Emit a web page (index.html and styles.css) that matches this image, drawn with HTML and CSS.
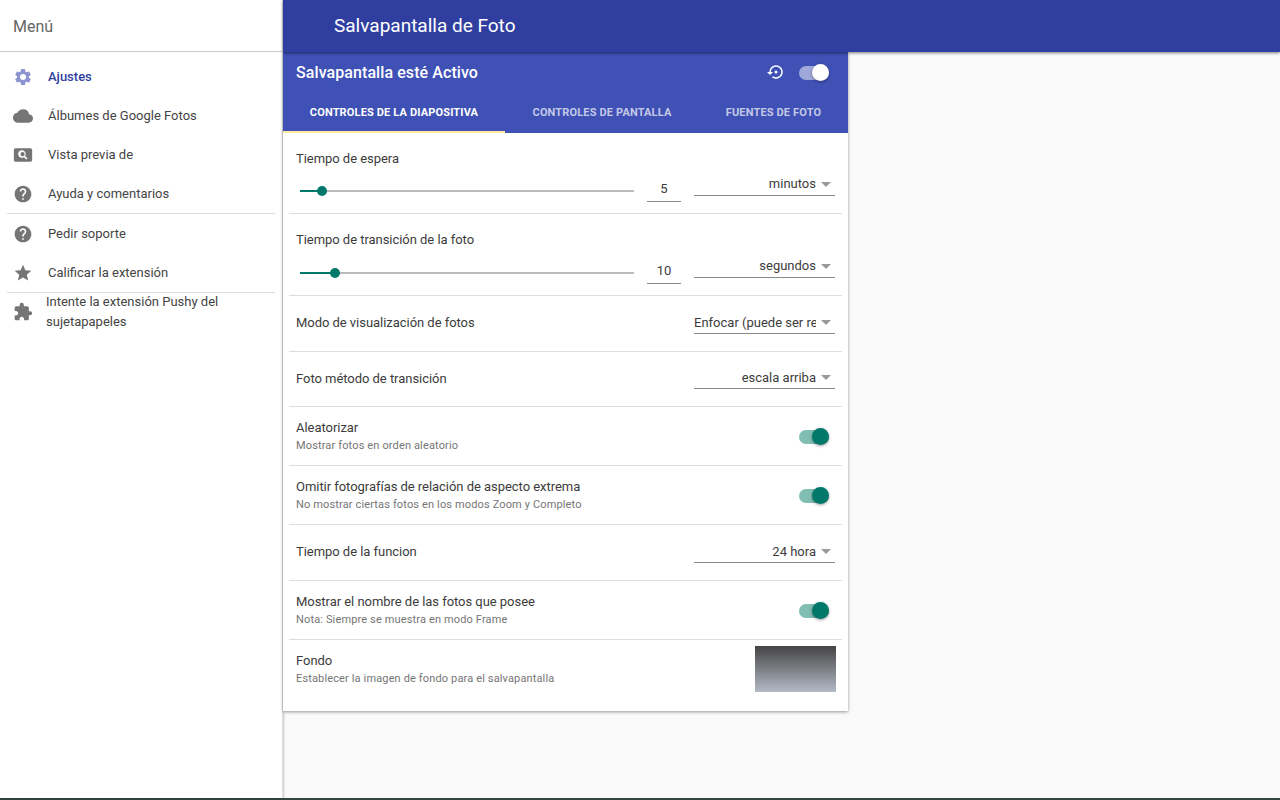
FILE: index.html
```html
<!DOCTYPE html>
<html lang="es">
<head>
  <meta charset="UTF-8" />
  <title>Salvapantalla de Foto</title>
  <link rel="stylesheet" href="styles.css">
</head>
<body>
  <div class="page">

    <!-- Menu lateral -->
    <aside class="drawer">
      <div class="drawer-title">Menú</div>
      <nav class="menu">
        <a class="menu-item selected">
          <svg class="icon" viewBox="0 0 24 24"><path d="M19.14 12.94c.04-.3.06-.61.06-.94s-.02-.64-.07-.94l2.03-1.58a.49.49 0 0 0 .12-.61l-1.92-3.32a.49.49 0 0 0-.59-.22l-2.39.96a7.03 7.03 0 0 0-1.62-.94l-.36-2.54a.48.48 0 0 0-.48-.41h-3.84a.47.47 0 0 0-.47.41l-.36 2.54c-.59.24-1.13.57-1.62.94l-2.39-.96a.48.48 0 0 0-.59.22L2.74 8.87a.47.47 0 0 0 .12.61l2.03 1.58c-.05.3-.09.63-.09.94s.02.64.07.94l-2.03 1.58a.49.49 0 0 0-.12.61l1.92 3.32c.12.22.37.29.59.22l2.39-.96c.5.38 1.03.7 1.62.94l.36 2.54c.05.24.24.41.48.41h3.84c.24 0 .44-.17.47-.41l.36-2.54c.59-.24 1.13-.56 1.62-.94l2.39.96c.22.08.47 0 .59-.22l1.92-3.32a.47.47 0 0 0-.12-.61l-2.01-1.58zM12 15.6A3.6 3.6 0 1 1 12 8.4a3.6 3.6 0 0 1 0 7.2z"/></svg>
          <span>Ajustes</span>
        </a>
        <a class="menu-item">
          <svg class="icon" viewBox="0 0 24 24"><path d="M19.35 10.04A7.49 7.49 0 0 0 12 4C9.11 4 6.6 5.64 5.35 8.04A5.994 5.994 0 0 0 0 14c0 3.31 2.69 6 6 6h13c2.76 0 5-2.24 5-5 0-2.64-2.05-4.78-4.65-4.96z"/></svg>
          <span>Álbumes de Google Fotos</span>
        </a>
        <a class="menu-item">
          <svg class="icon" viewBox="0 0 24 24"><path d="M21 4H3a2 2 0 0 0-2 2v12a2 2 0 0 0 2 2h18a2 2 0 0 0 2-2V6a2 2 0 0 0-2-2zm-5 13.5-2.9-2.9a4.5 4.5 0 1 1 1.4-1.4l2.9 2.9-1.4 1.4zM11.5 8.5a2.5 2.5 0 1 0 0 5 2.5 2.5 0 0 0 0-5z" fill-rule="evenodd"/></svg>
          <span>Vista previa de</span>
        </a>
        <a class="menu-item">
          <svg class="icon" viewBox="0 0 24 24"><path d="M12 2C6.48 2 2 6.48 2 12s4.48 10 10 10 10-4.48 10-10S17.52 2 12 2zm1 17h-2v-2h2v2zm2.07-7.75-.9.92C13.45 12.9 13 13.5 13 15h-2v-.5c0-1.1.45-2.1 1.17-2.83l1.24-1.26c.37-.36.59-.86.59-1.41 0-1.1-.9-2-2-2s-2 .9-2 2H8c0-2.21 1.79-4 4-4s4 1.79 4 4c0 .88-.36 1.68-.93 2.25z"/></svg>
          <span>Ayuda y comentarios</span>
        </a>
        <hr class="menu-line">
        <a class="menu-item">
          <svg class="icon" viewBox="0 0 24 24"><path d="M12 2C6.48 2 2 6.48 2 12s4.48 10 10 10 10-4.48 10-10S17.52 2 12 2zm1 17h-2v-2h2v2zm2.07-7.75-.9.92C13.45 12.9 13 13.5 13 15h-2v-.5c0-1.1.45-2.1 1.17-2.83l1.24-1.26c.37-.36.59-.86.59-1.41 0-1.1-.9-2-2-2s-2 .9-2 2H8c0-2.21 1.79-4 4-4s4 1.79 4 4c0 .88-.36 1.68-.93 2.25z"/></svg>
          <span>Pedir soporte</span>
        </a>
        <a class="menu-item">
          <svg class="icon" viewBox="0 0 24 24"><path d="M12 17.27 18.18 21l-1.64-7.03L22 9.24l-7.19-.61L12 2 9.19 8.63 2 9.24l5.46 4.73L5.82 21z"/></svg>
          <span>Calificar la extensión</span>
        </a>
        <hr class="menu-line">
        <a class="menu-item tall">
          <svg class="icon" viewBox="0 0 24 24"><path d="M20.5 11H19V7c0-1.1-.9-2-2-2h-4V3.5a2.5 2.5 0 0 0-5 0V5H4c-1.1 0-1.99.9-1.99 2v3.8H3.5c1.49 0 2.7 1.21 2.7 2.7s-1.21 2.7-2.7 2.7H2V20c0 1.1.9 2 2 2h3.8v-1.5c0-1.49 1.21-2.7 2.7-2.7s2.7 1.21 2.7 2.7V22H17c1.1 0 2-.9 2-2v-4h1.5a2.5 2.5 0 0 0 0-5z"/></svg>
          <span>Intente la extensión Pushy del sujetapapeles</span>
        </a>
      </nav>
    </aside>

    <div class="content">
      <header class="topbar">Salvapantalla de Foto</header>

      <main class="card">
        <div class="card-head">
          <div class="card-toolbar">
            <span class="card-title">Salvapantalla esté Activo</span>
            <svg class="restore" viewBox="0 0 24 24"><path d="M14 12a2 2 0 1 0-4 0 2 2 0 0 0 4 0zm-2-9a9 9 0 0 0-9 9H0l4 4 4-4H5a7 7 0 1 1 2.94 5.7l-1.42 1.44A9 9 0 1 0 12 3z"/></svg>
            <span class="toggle white"><i></i></span>
          </div>
          <div class="tabs">
            <div class="tab active">Controles de la diapositiva</div>
            <div class="tab second">Controles de pantalla</div>
            <div class="tab third">Fuentes de foto</div>
          </div>
        </div>

        <div class="rows">
          <div class="row slider-row">
            <div class="row-label">Tiempo de espera</div>
            <div class="slider-line">
              <div class="slider"><b class="fill" style="width: 22px"></b><b class="knob" style="left: 22px"></b></div>
              <div class="num">5</div>
              <div class="select"><span>minutos</span></div>
            </div>
          </div>
          <div class="row slider-row">
            <div class="row-label">Tiempo de transición de la foto</div>
            <div class="slider-line">
              <div class="slider"><b class="fill" style="width: 35px"></b><b class="knob" style="left: 35px"></b></div>
              <div class="num">10</div>
              <div class="select"><span>segundos</span></div>
            </div>
          </div>
          <div class="row simple">
            <div class="row-label">Modo de visualización de fotos</div>
            <div class="select cut"><span>Enfocar (puede ser re</span></div>
          </div>
          <div class="row simple short">
            <div class="row-label">Foto método de transición</div>
            <div class="select"><span>escala arriba</span></div>
          </div>
          <div class="row double">
            <div>
              <div class="row-label">Aleatorizar</div>
              <div class="row-note">Mostrar fotos en orden aleatorio</div>
            </div>
            <span class="toggle"><i></i></span>
          </div>
          <div class="row double">
            <div>
              <div class="row-label">Omitir fotografías de relación de aspecto extrema</div>
              <div class="row-note">No mostrar ciertas fotos en los modos Zoom y Completo</div>
            </div>
            <span class="toggle"><i></i></span>
          </div>
          <div class="row simple">
            <div class="row-label">Tiempo de la funcion</div>
            <div class="select"><span>24 hora</span></div>
          </div>
          <div class="row double">
            <div>
              <div class="row-label">Mostrar el nombre de las fotos que posee</div>
              <div class="row-note">Nota: Siempre se muestra en modo Frame</div>
            </div>
            <span class="toggle"><i></i></span>
          </div>
          <div class="row background">
            <div>
              <div class="row-label">Fondo</div>
              <div class="row-note">Establecer la imagen de fondo para el salvapantalla</div>
            </div>
            <div class="swatch"></div>
          </div>
        </div>
      </main>
    </div>
  </div>
  <div class="bottom-strip"></div>
</body>
</html>
```

FILE: styles.css
```css
* {
  box-sizing: border-box;
}

body {
  margin: 0;
  height: 800px;
  overflow: hidden;
  font-family: 'Roboto', sans-serif;
  font-size: 13px;
  color: #3c3c3c;
  background-color: #fafafa;
}

.page {
  display: flex;
  height: 798px;
}

.bottom-strip {
  height: 2px;
  background-color: #33473f;
}

/* Menu lateral */
.drawer {
  width: 283px;
  flex: none;
  background-color: #fff;
  border-right: 1px solid #ddd;
  box-shadow: 1px 0 2px rgba(0,0,0,0.2);
}

.drawer-title {
  height: 52px;
  padding: 0 13px;
  font-size: 16px;
  line-height: 53px;
  color: #666;
  border-bottom: 1px solid #ccc;
}

.menu {
  padding-top: 5px;
}

.menu-item {
  display: flex;
  align-items: center;
  height: 39px;
  padding-left: 13px;
  font-size: 13px;
  color: #444;
}

.menu-item .icon {
  width: 20px;
  height: 20px;
  margin-right: 15px;
  fill: #757575;
  flex: none;
}

.menu-item.selected {
  color: #303f9f;
  font-weight: 500;
}

.menu-item.selected .icon {
  fill: #8c95cf;
}

.menu-item.tall {
  height: 40px;
  margin-top: -1px;
  line-height: 20px;
}

.menu-item.tall .icon {
  margin-right: 13px;
}

.menu-item.tall span {
  width: 190px;
}

.menu-line {
  height: 1px;
  margin: 0 7px;
  border: 0;
  background-color: #ddd;
}

/* Barra superior */
.content {
  flex: 1;
  min-width: 0;
}

.topbar {
  height: 52px;
  padding-left: 51px;
  font-size: 19px;
  line-height: 52px;
  color: #fff;
  background-color: #303f9f;
  box-shadow: 0 1px 3px rgba(0,0,0,0.5);
  position: relative;
}

/* Tarjeta */
.card {
  width: 565px;
  background-color: #fff;
  box-shadow: 0 1px 3px rgba(0,0,0,0.4);
}

.card-head {
  height: 81px;
  background-color: #3f51b5;
  color: #fff;
}

.card-toolbar {
  display: flex;
  align-items: center;
  height: 40px;
  padding: 0 19px 0 13px;
}

.card-title {
  flex: 1;
  font-size: 16px;
  font-weight: 500;
  letter-spacing: 0.08px;
}

.restore {
  width: 18px;
  height: 18px;
  fill: #fff;
  margin-right: 14px;
}

.tabs {
  display: flex;
  height: 41px;
}

.tab {
  font-size: 11px;
  font-weight: 700;
  letter-spacing: 0.15px;
  text-align: center;
  text-transform: uppercase;
  line-height: 42px;
  color: rgba(255,255,255,0.7);
}

.tab.active {
  width: 222px;
  color: #fff;
  border-bottom: 2px solid #ffeb9b;
}

.tab.second {
  width: 194px;
}

.tab.third {
  width: 149px;
}

/* Interruptores */
.toggle {
  display: block;
  position: relative;
  width: 30px;
  height: 14px;
  margin-top: 2px;
  border-radius: 7px;
  background-color: #80bdb3;
  flex: none;
}

.toggle i {
  position: absolute;
  top: -2px;
  right: 0;
  width: 17px;
  height: 17px;
  border-radius: 50%;
  background-color: #00796b;
  box-shadow: 0 1px 3px rgba(0,0,0,0.4);
}

.toggle.white {
  background-color: #9fa8da;
}

.toggle.white i {
  background-color: #fff;
}

/* Filas */
.rows {
  padding: 0 6px;
}

.row {
  padding: 0 7px;
  border-bottom: 1px solid #ddd;
}

.row:last-child {
  border-bottom: 0;
}

.row-label {
  font-size: 13px;
  letter-spacing: -0.04px;
  color: #3c3c3c;
}

.row-note {
  margin-top: 4px;
  font-size: 11px;
  letter-spacing: 0.14px;
  color: #757575;
}

.row.simple,
.row.double,
.row.background {
  display: flex;
  align-items: center;
  justify-content: space-between;
}

.row.simple {
  height: 56px;
  padding-bottom: 2px;
}

.row.short {
  height: 55px;
}

.row.double {
  height: 59px;
  padding-right: 13px;
}

.row.double .row-label {
  margin-top: -1px;
}

.row.background {
  height: 71px;
  align-items: flex-start;
  padding-top: 6px;
  padding-right: 6px;
}

.row.background > div:first-child {
  padding-top: 7px;
}

.slider-row {
  height: 82px;
  padding-top: 18px;
}

.slider-row:first-child {
  height: 81px;
}

.slider-line {
  display: flex;
  align-items: flex-start;
  margin-top: 12px;
}

.slider-row + .slider-row .slider-line {
  margin-top: 13px;
}

.slider {
  position: relative;
  width: 334px;
  height: 2px;
  margin: 12px 13px 0 4px;
  background-color: #bbb;
  flex: none;
}

.fill {
  position: absolute;
  left: 0;
  top: 0;
  height: 2px;
  background-color: #00796b;
}

.knob {
  position: absolute;
  top: -4px;
  width: 10px;
  height: 10px;
  margin-left: -5px;
  border-radius: 50%;
  background-color: #00796b;
}

.num {
  width: 34px;
  height: 24px;
  margin-right: 13px;
  font-size: 13px;
  line-height: 22px;
  text-align: center;
  border-bottom: 1px solid #888;
  flex: none;
}

.select {
  position: relative;
  width: 141px;
  height: 24px;
  padding-right: 19px;
  margin-top: -6px;
  font-size: 13px;
  line-height: 24px;
  text-align: right;
  white-space: nowrap;
  color: #3c3c3c;
  border-bottom: 1px solid #888;
  flex: none;
}

.select span {
  display: block;
  height: 23px;
  overflow: hidden;
}

.row.simple .select {
  margin-top: 0;
  margin-bottom: 2px;
  line-height: 26px;
}

.select::after {
  content: "";
  position: absolute;
  right: 4px;
  top: 10px;
  border-left: 5px solid transparent;
  border-right: 5px solid transparent;
  border-top: 5px solid #999;
}

.select.cut {
  text-align: left;
}

.swatch {
  width: 81px;
  height: 46px;
  background: linear-gradient(#444, #b4bac6);
}
```
